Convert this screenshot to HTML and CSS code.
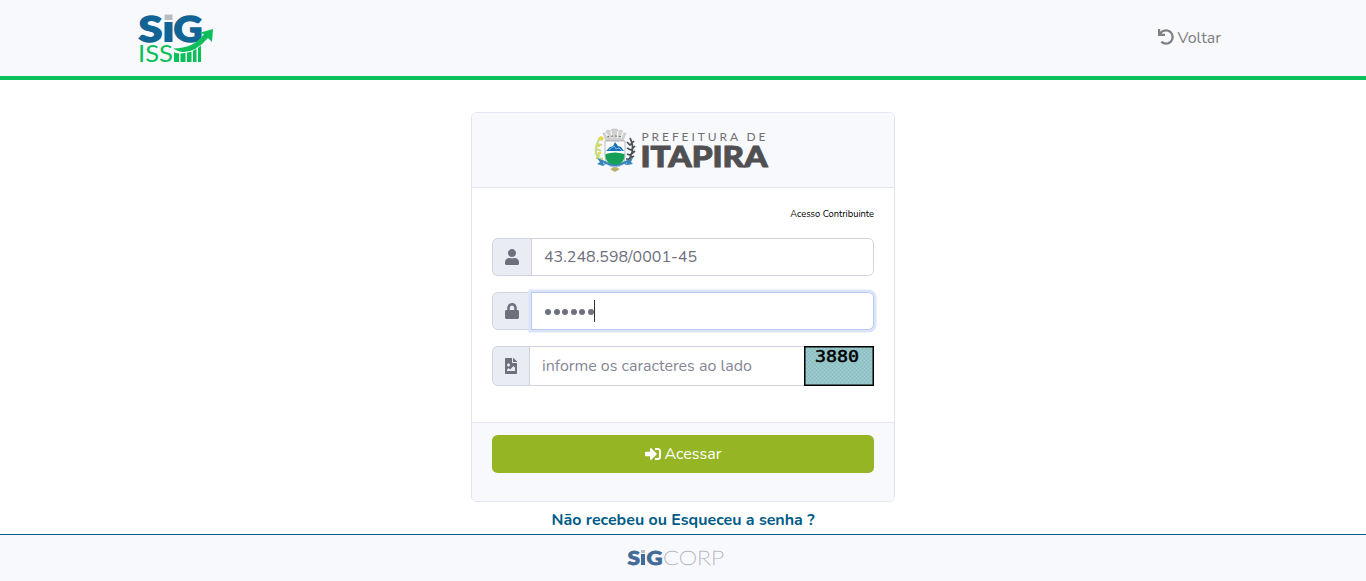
FILE: index.html
```html
<!DOCTYPE html>
<html lang="pt-BR">
<head>
<meta charset="utf-8">
<title>SIG ISS</title>
<link rel="stylesheet" href="styles.css">
</head>
<body>
<header class="topbar">
  <svg class="brand" width="76" height="50" viewBox="0 0 76 50" role="img" aria-label="SIG ISS">
    <g class="heavy" fill="#126494" stroke="#126494" stroke-width="1.4" font-size="36">
      <text x="0.500" y="28.500" textLength="24" lengthAdjust="spacingAndGlyphs">S</text>
      <text x="35.500" y="28.500" textLength="29" lengthAdjust="spacingAndGlyphs">G</text>
    </g>
    <path fill="#b9bcc0" d="M26.500 1.500h8V7h-8z"/>
    <path fill="#126494" d="M26.500 9h8v20h-8z"/>
    <text class="thin" x="0" y="48.500" font-size="23" fill="#0bbf5b" textLength="35" lengthAdjust="spacingAndGlyphs">ISS</text>
    <path fill="#0bbf5b" d="M36 39h5v10h-5zM42.500 40h5v9h-5zM49 38.500h4.500V49H49zM55 35.500h3.500V49H55zM60 31h3v18h-3z"/>
    <path fill="#f8f9fd" d="M35 34q22 2 32-14l3 3q-11 20-33 17z"/>
    <path fill="#0bbf5b" d="M35 35.500q21 0 31-14.500l-5-1 14-4-1 13-4-4Q57 40 44 39q-5-1-9-3.500z"/>
  </svg>
  <a class="back"><svg width="16" height="16" viewBox="0 0 512 512"><path fill="currentColor" d="M212.333 224.333H12c-6.627 0-12-5.373-12-12V12C0 5.373 5.373 0 12 0h48c6.627 0 12 5.373 12 12v78.112C117.773 39.279 184.260 7.470 258.175 8.007c136.906.994 246.448 111.623 246.157 248.532C504.041 393.258 393.120 504 256.333 504c-64.089 0-122.496-24.313-166.510-64.215-5.099-4.622-5.334-12.554-.467-17.420l33.967-33.967c4.474-4.474 11.662-4.717 16.401-.525C170.760 415.336 211.580 432 256.333 432c97.268 0 176-78.716 176-176 0-97.267-78.716-176-176-176-58.496 0-110.280 28.476-142.274 72.333h98.274c6.627 0 12 5.373 12 12v48c0 6.627-5.373 12-12 12z"/></svg><span>Voltar</span></a>
</header>

<main class="content">
  <section class="card">
    <div class="card-header">
      <svg width="176" height="46" viewBox="0 0 176 46" role="img" aria-label="Prefeitura de Itapira">
        <!-- mural crown -->
        <path fill="#d2d2d2" stroke="#aaa" stroke-width=".4" d="M9 6l3 0 1-3 4 1 1-2h5l1 2 4-1 1 3 3 0-3 8H12z"/>
        <path stroke="#fafafa" stroke-width="1.200" fill="none" d="M12 6l2 5M17 4l1 7M24 4l-1 7M29 5l-2 6"/>
        <path stroke="#777" stroke-width="1.200" stroke-dasharray="2 2" d="M13 10q8-2 16 0" fill="none"/>
        <!-- branches -->
        <path fill="none" stroke="#c4da85" stroke-width="2" d="M10 37Q-4 26 6 11M1 26l5 3M1 21l6 3M2 17l6 1M4 13l5-1M2 31l7 1"/>
        <path fill="#e5d64b" d="M4 11l3-2 3 2-2 3zM3 18h3v2H3zM4 25h3v2H4z"/>
        <path fill="none" stroke="#4a5054" stroke-width="1.700" d="M31 37q12-12 5-26M33 15l3 3 4-4M33 21l4 2 4-4M33 27l3 1 5-4M32 32h3l5-3"/>
        <!-- shield -->
        <path fill="#fff" stroke="#a2a6ac" stroke-width=".8" d="M11 14h20v15q0 9-10 12-10-3-10-12z"/>
        <path fill="#1874b8" d="M12 24l4-4 3-1 2-4 3 4 3 1 3 4v2H12z"/>
        <path stroke="#85bae0" fill="none" d="M15 23l5-4 2 3 3-1 3 3"/>
        <path fill="#fff" d="M12 24h18v4H12z"/>
        <path fill="#15a058" d="M11.500 27q9.500-3 19 0v3q-1 7-9.500 9-8.500-2-9.500-9z"/>
        <!-- ribbon -->
        <path fill="#3a84b9" d="M3 31l8 3q10 7 20 0l8-3-2 4 2 2-6 1-3-1q-9 6-18 0l-3 2-6-2 3-2z"/>
        <path stroke="#c5dff0" fill="none" stroke-dasharray="2 1" d="M9 36q12 7 24 0"/>
        <path fill="#b9b06d" d="M16 42l5-2 5 2-5 3z"/>
        <text class="thin" x="47.500" y="14" font-size="12" fill="#707073" textLength="124">PREFEITURA DE</text>
        <text class="heavy" x="46.500" y="39.500" font-size="28.500" fill="#505052" stroke="#505052" stroke-width="1" textLength="127" lengthAdjust="spacingAndGlyphs">ITAPIRA</text>
      </svg>
    </div>
    <div class="card-body">
      <p class="access-label">Acesso Contribuinte</p>
      <div class="input-group">
        <span class="addon"><svg width="14" height="16" viewBox="0 0 448 512"><path fill="currentColor" d="M224 256c70.700 0 128-57.300 128-128S294.700 0 224 0 96 57.300 96 128s57.300 128 128 128zm89.600 32h-16.700c-22.200 10.200-46.900 16-72.900 16s-50.600-5.800-72.900-16h-16.700C60.200 288 0 348.200 0 422.400V464c0 26.500 21.500 48 48 48h352c26.500 0 48-21.500 48-48v-41.600c0-74.200-60.200-134.400-134.400-134.400z"/></svg></span>
        <div class="field number">43.248.598/0001-45</div>
      </div>
      <div class="input-group">
        <span class="addon"><svg width="14" height="16" viewBox="0 0 448 512"><path fill="currentColor" d="M400 224h-24v-72C376 68.200 307.800 0 224 0S72 68.200 72 152v72H48c-26.500 0-48 21.500-48 48v192c0 26.500 21.500 48 48 48h352c26.500 0 48-21.500 48-48V272c0-26.500-21.500-48-48-48zm-104 0H152v-72c0-39.700 32.300-72 72-72s72 32.300 72 72v72z"/></svg></span>
        <div class="field focused"><span class="dots"><i></i><i></i><i></i><i></i><i></i><i></i></span><span class="caret"></span></div>
      </div>
      <div class="input-group captcha-group">
        <span class="addon narrow"><svg width="12" height="16" viewBox="0 0 384 512"><path fill="currentColor" d="M384 121.941V128H256V0h6.059a24 24 0 0 1 16.970 7.029l97.941 97.941a24 24 0 0 1 7.030 16.971zM248 160c-13.200 0-24-10.800-24-24V0H24C10.745 0 0 10.745 0 24v464c0 13.255 10.745 24 24 24h336c13.255 0 24-10.745 24-24V160H248zm-135.455 16c26.510 0 48 21.490 48 48s-21.490 48-48 48-48-21.490-48-48 21.491-48 48-48zm208 240h-256l.485-48.485L104.545 328c4.686-4.686 11.799-4.201 16.485.485L160.545 368 264.060 264.485c4.686-4.686 12.284-4.686 16.971 0L320.545 304v112z"/></svg></span>
        <div class="field captcha-field placeholder">informe os caracteres ao lado</div>
        <svg class="captcha" width="70" height="40" viewBox="0 0 70 40">
          <defs><pattern id="weave" width="4" height="4" patternUnits="userSpaceOnUse"><path fill="#94c6c9" d="M0 0h4v4H0z"/><path fill="#88bbc0" d="M0 0h1v1H0zM2 2h1v1H2z"/><path fill="#a2cfcf" d="M2 0h1v1H2zM0 2h1v1H0z"/></pattern></defs>
          <path fill="url(#weave)" stroke="#000" stroke-width="1.500" d="M.75.75h68.500v38.500H.75z"/>
          <text class="digits" x="11" y="16" font-size="15" stroke="#000" stroke-width=".5" textLength="44" lengthAdjust="spacingAndGlyphs">3880</text>
        </svg>
      </div>
    </div>
    <div class="card-footer">
      <button class="submit"><svg width="16" height="16" viewBox="0 0 512 512"><path fill="currentColor" d="M416 448h-84c-6.600 0-12-5.400-12-12v-40c0-6.600 5.400-12 12-12h84c17.700 0 32-14.300 32-32V160c0-17.700-14.300-32-32-32h-84c-6.600 0-12-5.400-12-12V76c0-6.600 5.400-12 12-12h84c53 0 96 43 96 96v192c0 53-43 96-96 96zm-47-209L201 71c-15-15-41-4.500-41 17v96H24c-13.300 0-24 10.700-24 24v96c0 13.300 10.700 24 24 24h136v96c0 21.500 26 32 41 17l168-168c9.300-9.400 9.300-24.600 0-34z"/></svg><span>Acessar</span></button>
    </div>
  </section>
  <a class="forgot">Não recebeu ou Esqueceu a senha ?</a>
</main>

<footer class="footer">
  <svg width="98" height="20" viewBox="0 0 98 20" role="img" aria-label="SIGCORP">
    <g class="heavy" fill="#426b98" stroke="#426b98" stroke-width=".8" font-size="19.500">
      <text x="0.500" y="17" textLength="12.500" lengthAdjust="spacingAndGlyphs">S</text>
      <text x="19.500" y="17" textLength="16" lengthAdjust="spacingAndGlyphs">G</text>
    </g>
    <path fill="#b9bcc0" d="M14 2h4v3h-4z"/><path fill="#426b98" d="M14 6h4v11h-4z"/>
    <text class="hairline" x="36" y="17" font-size="20.500" fill="#b3b5ba" stroke="#b3b5ba" stroke-width=".5" textLength="61" lengthAdjust="spacingAndGlyphs">CORP</text>
  </svg>
</footer>
</body>
</html>
```
FILE: styles.css
```css
* { box-sizing: border-box; }
body {
  margin: 0;
  height: 581px;
  display: flex;
  flex-direction: column;
  overflow: hidden;
  background: #fff;
  color: #6e707e;
  font: 400 16px/24px Nunito, Lato, sans-serif;
}
svg { display: block; flex: none; overflow: visible; }
.heavy { font-family: Lato, sans-serif; font-weight: 900; }
.thin { font-family: Lato, sans-serif; font-weight: 400; }
.hairline { font-family: Lato, sans-serif; font-weight: 100; }
.digits { font-family: "DejaVu Sans Mono", monospace; font-weight: 400; }

.topbar {
  height: 80px;
  flex: none;
  display: flex;
  justify-content: space-between;
  align-items: flex-start;
  padding: 13px 145px 0 138px;
  background: #f8f9fd;
  border-bottom: 4px solid #0bbf5b;
}
.back {
  display: flex;
  align-items: center;
  gap: 4px;
  margin-top: 13px;
  color: #808080;
}
.back svg { margin-top: -2px; }

.content { flex: 1; display: flex; flex-direction: column; align-items: center; padding-top: 32px; }
.card {
  width: 424px;
  height: 390px;
  display: flex;
  flex-direction: column;
  border: 1px solid #e3e6f0;
  border-radius: 5.600px;
  overflow: hidden;
}
.card-header {
  height: 75px;
  padding: 14px 0 0 122px;
  background: #f8f9fd;
  border-bottom: 1px solid #e3e6f0;
}
.card-body { flex: 1; padding: 20px 20px 0; }
.access-label {
  margin: 0 0 18px;
  height: 12px;
  line-height: 12px;
  text-align: right;
  font-size: 9.300px;
  color: #000;
}
.input-group { display: flex; height: 38px; margin-bottom: 16px; }
.addon {
  width: 40px;
  display: flex;
  align-items: center;
  justify-content: center;
  background: #eaecf4;
  border: 1px solid #d1d3e2;
  border-radius: 5.600px 0 0 5.600px;
  margin-right: -1px;
}
.addon.narrow { width: 38px; }
.field {
  flex: 1;
  display: flex;
  align-items: center;
  padding: 0 12px;
  background: #fff;
  border: 1px solid #d1d3e2;
  border-radius: 0 5.600px 5.600px 0;
  white-space: nowrap;
}
.number { padding-bottom: 1px; }
.focused { position: relative; padding-left: 13px; border-color: #bac8f3; box-shadow: 0 0 0 2.500px #dce4f9; }
.dots { display: flex; gap: 2.500px; margin-top: 1px; }
.dots i { width: 6px; height: 6px; border-radius: 50%; background: #6e707e; }
.caret { width: 1px; height: 22px; margin-left: .5px; background: #333; }
.captcha-group { height: 40px; }
.captcha-field { border-radius: 0; border-right: 0; }
.placeholder { color: #858796; }

.card-footer { height: 79px; padding: 12px 20px; background: #f8f9fd; border-top: 1px solid #e3e6f0; }
.submit {
  width: 100%;
  height: 38px;
  display: flex;
  align-items: center;
  justify-content: center;
  gap: 4px;
  padding: 0;
  border: 0;
  border-radius: 5.600px;
  background: #95b524;
  color: #fff;
  font: inherit;
}
.forgot { margin-top: 6px; color: #005b87; font-weight: 700; }
.footer {
  height: 47px;
  flex: none;
  display: flex;
  justify-content: center;
  padding: 13px 14px 0 0;
  background: #f8f9fd;
  border-top: 1px solid #005b87;
}
```
